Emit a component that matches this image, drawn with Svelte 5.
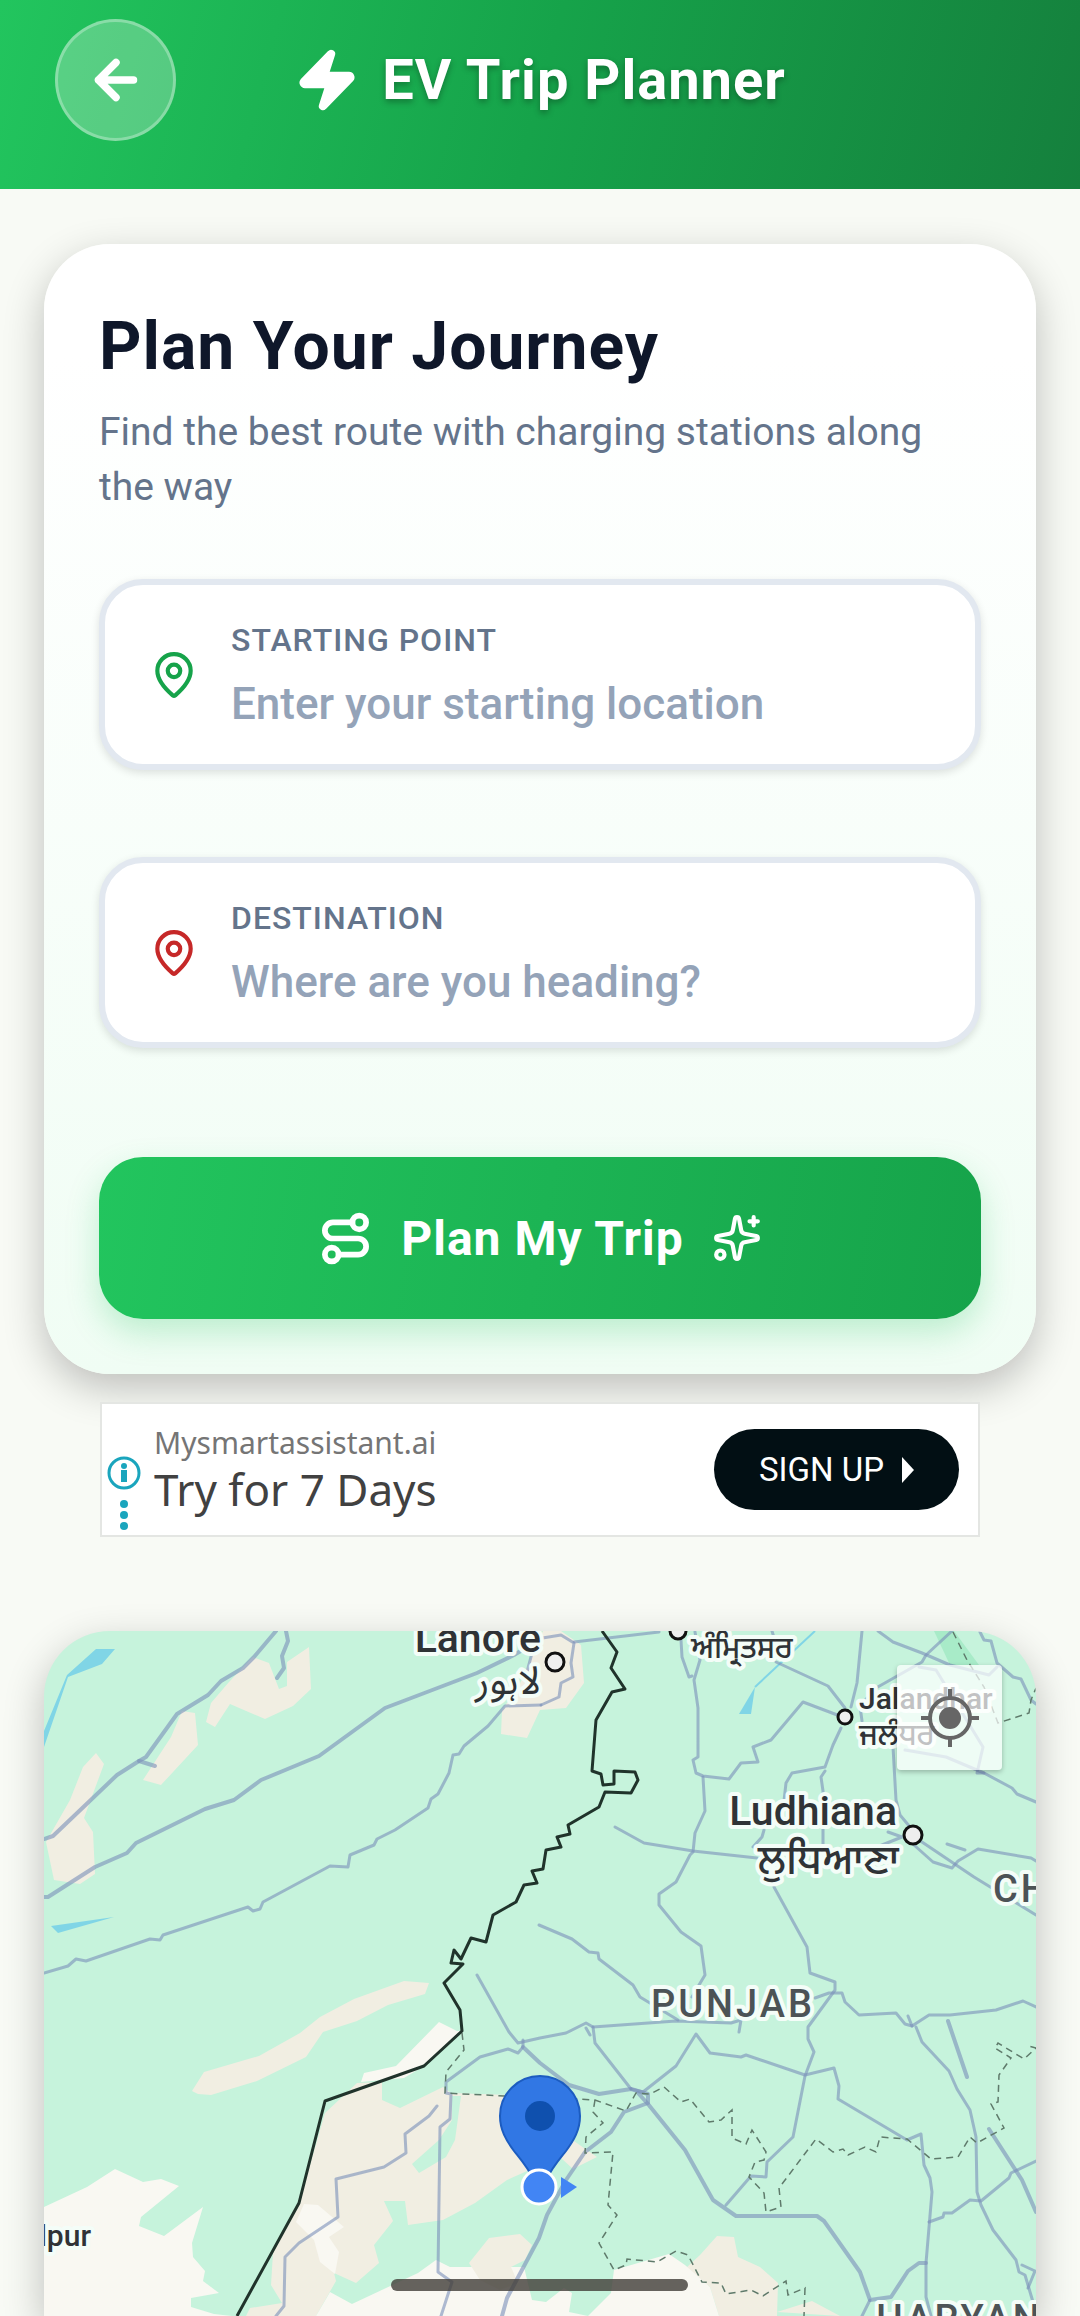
<script>
  let start = $state('')
  let destination = $state('')

  const sand = [
    '209,26 225,32 235,58 243,55 243,31 265,16 267,58 249,75 221,88 186,73 171,96 162,91 167,72 185,51',
    '138,80 151,82 154,114 117,154 99,149 127,106',
    '52,122 60,133 40,187 49,201 51,243 36,253 10,249 2,211 26,169 39,136',
    '499,0 517,0 537,14 540,52 522,77 496,79 483,107 457,103 458,79 475,55 490,20',
    '148,460 160,441 215,425 256,402 276,386 310,368 360,350 385,352 381,363 344,374 313,390 279,401 262,426 213,450 167,464 154,463',
    '281,482 313,452 338,451 338,469 356,477 399,456 407,462 492,465 492,536 463,549 431,572 399,589 364,594 361,570 340,570 349,590 330,614 335,632 312,652 290,642 292,650 272,685 202,685 206,677 238,672 227,654 229,622 255,572',
    '673,605 690,606 694,626 716,636 734,652 733,685 675,685 666,656 642,637 656,624',
    '733,681 768,670 796,685',
    '527,508 553,526 529,538 517,527'
  ]

  const pale = [
    '395,391 413,400 418,400 380,435 360,447 317,451 320,442 352,435',
    '260,573 274,574 300,596 285,606 295,621 291,643 276,631 270,609 252,591',
    '0,576 43,556 71,538 99,551 117,548 135,555 97,586 95,595 120,605 159,576 148,612 149,626 161,640 159,650 175,662 147,667 147,676 170,683 188,685 0,685',
    '272,685 286,661 308,673 374,642 392,629 406,636 480,636 488,669 502,671 520,657 528,662 525,681 544,685',
    '544,685 567,662 570,639 625,623 641,634 666,656 675,685'
  ]

  const water = [
    '56,18 71,18 58,33 24,46 0,116 0,100 23,44 52,18',
    '7,295 70,286 14,302',
    '711,56 707,83 695,83'
  ]

  const highways = [
    '232,0 210,26 199,37 177,50 164,64 133,83 102,126 95,130 73,144 9,205 0,208',
    '242,0 244,10 238,25 240,37 233,47',
    '95,130 111,135',
    '480,18 470,24 433,42 341,77 275,125 217,149 190,169 161,178 92,212 83,222 51,236 4,266 0,266',
    '904,390 923,446',
    '945,498 978,549 992,581',
    '479,416 496,432 525,454 555,463 587,458 604,463 604,472 580,481 567,501 541,521 522,549 503,584 495,607 463,667 458,685',
    '594,462 604,473 641,519 669,569 692,585 773,585 780,590 816,641 826,669 847,666 864,640 875,632 882,632'
  ]

  const roads = [
    '497,74 461,75 444,95 420,115 415,123 409,124 405,142 394,163 387,168 384,177 351,199 333,208 330,214 306,224 304,236 286,235 219,271 216,278 209,280 204,276 119,304 116,309 106,308 42,330 32,328 24,335 0,342',
    '497,74 515,66 517,52 529,46 527,32 530,12 517,4 480,10',
    '488,22 483,41',
    '530,11 615,1',
    '637,9 638,26 645,46 648,45',
    '651,1 656,29 650,49 654,77 654,126 649,129 652,142 659,145 685,148 697,132 714,131 709,116 727,109 759,71 796,85',
    '659,146 661,180 651,202 649,221 646,224 632,251 615,263 615,274 637,301 657,315 661,344 655,354 648,366',
    '571,196 600,212 649,220 713,227',
    '728,0 731,10',
    '732,31 784,55 801,77',
    '818,0 813,52 807,76',
    '797,97 789,114 781,136 748,142 742,152 740,170',
    '720,199 718,206 709,216',
    '781,140 777,146 779,160 779,220',
    '730,256 763,316 766,342 791,351 791,359 764,396 764,408 770,421 761,445 749,506 723,531 722,546 707,545 682,574',
    '834,0 849,11 878,22 906,34 945,44 953,36',
    '908,0 882,24 878,31 832,57 816,75 818,90',
    '936,1 940,9 947,10 953,32 969,46 977,48 987,69 992,73',
    '849,116 852,169 856,184 866,196 875,209 930,246 992,284',
    '870,214 889,231 908,237 914,230 934,218 987,227 992,230',
    '844,201 858,206 833,216',
    '903,213 921,219',
    '861,119 902,126 940,142 968,157 973,163 992,171',
    '875,36 892,39 939,116 933,142 940,142',
    '495,294 528,308 545,321 554,322 555,328 589,354 596,366 634,389',
    '433,344 465,401 474,412 496,407 522,402 542,392 549,396 632,390 687,392 697,389 695,401',
    '542,397 546,404',
    '479,409 479,416 474,422 464,418 436,426 402,451 402,462 407,463 406,488 396,496 394,641 408,651 397,685',
    '393,475 385,485 361,503 362,522 340,536 292,548 294,586 255,612 241,626 240,675 232,685',
    '549,396 551,412 587,458',
    '587,458 599,461 632,435 652,403 666,422 697,426 702,424 761,444 790,437 795,455 794,468 863,509 877,503 880,534 886,547 888,561 882,632 882,666 887,685',
    '826,669 818,685',
    '771,367 785,362 798,362 801,371 815,384 852,382 861,393 868,395 885,384 906,384 952,379 979,370 992,376',
    '864,385 868,395',
    '872,396 878,411 905,440 913,458 926,479 932,506 933,561 937,574 949,599 972,629 975,641 981,644 989,671',
    '978,634 991,640 984,657',
    '885,591 899,586 900,582 908,582 926,569 937,570 965,547 967,542 992,530'
  ]

  const stateLines = [
    '909,1 923,29 940,56 954,92 985,82 987,69 992,57',
    '418,402 420,419 402,441 401,462 460,465 534,468 551,469 582,480 592,462 606,463 620,456 637,471 646,468 665,491 677,489 688,479 688,507 702,513 708,499 722,521 720,529 711,531 705,546 720,562 722,581 737,576 735,557 772,508 789,521 799,518 804,524 821,516 832,521 836,506 863,508 887,528 914,526 926,506 933,512 960,497 947,473 954,471 955,444 967,427 951,417 954,412 980,428 992,417 984,415',
    '551,469 549,481 559,492 542,506 541,522 569,521 564,574 573,584 555,612 570,639 582,634 583,628 613,631 632,620 644,624 658,651 677,652 682,663 707,659 719,665 742,650 744,664 761,657 760,685'
  ]

  const border = '558,0 573,21 567,37 581,58 568,61 552,89 548,140 557,143 559,154 570,153 570,140 591,141 594,149 587,162 561,161 555,176 524,194 526,203 513,206 517,216 502,219 499,238 488,240 493,252 480,254 472,271 449,284 442,311 427,307 417,328 410,319 407,332 419,333 400,352 416,379 418,400 380,435 281,470 255,572 193,685'

  const cities = [
    { x: 511, y: 31, r: 9 },
    { x: 634, y: 0, r: 8 },
    { x: 801, y: 86, r: 7 },
    { x: 869, y: 204, r: 9 }
  ]

  const labels = [
    { text: 'Lahore', x: 497, y: 21, kind: 'city', end: true },
    { text: 'لاہور', x: 497, y: 63, kind: 'urdu' },
    { text: 'ਅੰਮ੍ਰਿਤਸਰ', x: 647, y: 27, kind: 'local' },
    { text: 'Jalandhar', x: 815, y: 78, kind: 'town' },
    { text: 'ਜਲੰਧਰ', x: 815, y: 114, kind: 'local' },
    { text: 'Ludhiana', x: 853, y: 194, kind: 'city', end: true },
    { text: 'ਲੁਧਿਆਣਾ', x: 855, y: 243, kind: 'local large', end: true },
    { text: 'CHANDIGARH', x: 949, y: 271, kind: 'region' },
    { text: 'PUNJAB', x: 607, y: 386, kind: 'region' },
    { text: 'HARYANA', x: 832, y: 701, kind: 'region' },
    { text: 'Bahawalpur', x: 47, y: 615, kind: 'town', end: true }
  ]
</script>

{#snippet pin(color)}
  <svg class="field-icon {color}" viewBox="0 0 24 24" aria-hidden="true">
    <path d="M20 10c0 4.993-5.539 10.193-7.399 11.799a1 1 0 0 1-1.202 0C9.539 20.193 4 14.993 4 10a8 8 0 0 1 16 0" />
    <circle cx="12" cy="10" r="3" />
  </svg>
{/snippet}

<div class="screen">
  <header class="topbar">
    <button class="back" aria-label="Back">
      <svg viewBox="0 0 24 24" aria-hidden="true">
        <path d="m12 19-7-7 7-7M19 12H5" />
      </svg>
    </button>
    <h1>
      <svg class="bolt" viewBox="0 0 24 24" aria-hidden="true">
        <path d="M4 14a1 1 0 0 1-.78-1.63l9.9-10.2a.5.5 0 0 1 .86.46l-1.92 6.02A1 1 0 0 0 13 10h7a1 1 0 0 1 .78 1.63l-9.9 10.2a.5.5 0 0 1-.86-.46l1.92-6.02A1 1 0 0 0 11 14z" />
      </svg>
      EV Trip Planner
    </h1>
  </header>

  <main>
    <form class="card" onsubmit={e => e.preventDefault()}>
      <h2>Plan Your Journey</h2>
      <p class="subtitle">Find the best route with charging stations along the way</p>

      <div class="field">
        {@render pin('green')}
        <div class="field-text">
          <label for="start">STARTING POINT</label>
          <input id="start" type="text" placeholder="Enter your starting location" bind:value={start} />
        </div>
      </div>

      <div class="field">
        {@render pin('red')}
        <div class="field-text">
          <label for="destination">DESTINATION</label>
          <input id="destination" type="text" placeholder="Where are you heading?" bind:value={destination} />
        </div>
      </div>

      <button class="plan" type="submit">
        <svg class="route" viewBox="0 0 24 24" aria-hidden="true">
          <circle cx="6" cy="19" r="3" />
          <path d="M9 19h8.5a3.5 3.5 0 0 0 0-7h-11a3.5 3.5 0 0 1 0-7H15" />
          <circle cx="18" cy="5" r="3" />
        </svg>
        <span>Plan My Trip</span>
        <svg class="sparkles" viewBox="0 0 24 24" aria-hidden="true">
          <path d="M11.017 2.814a1 1 0 0 1 1.966 0l1.051 5.558a2 2 0 0 0 1.594 1.594l5.558 1.051a1 1 0 0 1 0 1.966l-5.558 1.051a2 2 0 0 0-1.594 1.594l-1.051 5.558a1 1 0 0 1-1.966 0l-1.051-5.558a2 2 0 0 0-1.594-1.594l-5.558-1.051a1 1 0 0 1 0-1.966l5.558-1.051a2 2 0 0 0 1.594-1.594z" />
          <path d="M20 2v4M22 4h-4" />
          <circle cx="4" cy="20" r="2" />
        </svg>
      </button>
    </form>

    <aside class="ad">
      <svg class="ad-info" viewBox="0 0 36 80" aria-hidden="true">
        <circle class="ring" cx="18" cy="18" r="15" />
        <circle cx="18" cy="11" r="3" />
        <path d="M15 15h6v12h-6z" />
        <circle cx="18" cy="49" r="4" />
        <circle cx="18" cy="60" r="4" />
        <circle cx="18" cy="71" r="4" />
      </svg>
      <div class="ad-text">
        <span class="ad-site">Mysmartassistant.ai</span>
        <span class="ad-title">Try for 7 Days</span>
      </div>
      <button class="signup">
        SIGN UP
        <svg viewBox="0 0 12 26" aria-hidden="true"><path d="M0 0v26l12-13z" /></svg>
      </button>
    </aside>

    <section class="map" aria-label="Map">
      <svg class="map-canvas" viewBox="0 0 992 685" preserveAspectRatio="xMinYMin slice">
        <polygon class="wood" points="890,0 910,0 935,34 906,34" />
        {#each sand as points}
          <polygon class="sand" {points} />
        {/each}
        {#each pale as points}
          <polygon class="pale" {points} />
        {/each}
        <polygon class="sand" points="445,607 476,603 488,614 481,629 467,636 474,652 456,659 436,649 425,632" />
        <polygon class="land" points="417,465 411,509 402,526 375,542 368,533 395,509 408,489 408,465" />
        {#each water as points}
          <polygon class="water" {points} />
        {/each}
        <path class="river" d="M771 0 711 56" />

        {#each roads as points}
          <polyline class="road" {points} />
        {/each}
        {#each highways as points}
          <polyline class="road highway" {points} />
        {/each}
        {#each stateLines as points}
          <polyline class="state-line" {points} />
        {/each}
        <polyline class="border" points={border} />

        {#each cities as city}
          <circle class="city-dot" cx={city.x} cy={city.y} r={city.r} />
        {/each}
        {#each labels as label}
          <text class={label.kind} class:end={label.end} x={label.x} y={label.y}>{label.text}</text>
        {/each}

        <path class="marker" d="M456 485a40 40 0 0 1 80 0c0 14-6 24-14 35-8 10-15 18-19 28h-14c-4-10-11-18-19-28-8-11-14-21-14-35z" />
        <circle class="marker-hole" cx="496" cy="485" r="15" />
        <path class="heading" d="m517 546 16 10-16 11z" />
        <circle class="position" cx="495" cy="556" r="17" />
      </svg>
      <button class="locate" aria-label="My location">
        <svg viewBox="0 0 60 60" aria-hidden="true">
          <circle class="ring" cx="30" cy="30" r="20" />
          <circle cx="30" cy="30" r="11" />
          <path d="M30 1v10M30 49v10M1 30h10M49 30h10" />
        </svg>
      </button>
    </section>
  </main>

  <div class="home-indicator"></div>
</div>

<style>
  :global(body) {
    margin: 0;
    background: #f8faf5;
  }

  .screen {
    display: flex;
    flex-direction: column;
    height: 100vh;
    overflow: hidden;
    background: #f8faf5;
    font-family: Roboto, 'Liberation Sans', sans-serif;
  }

  h1,
  h2,
  p {
    margin: 0;
  }

  button {
    padding: 0;
    border: 0;
    font-family: inherit;
    cursor: pointer;
  }

  svg {
    display: block;
    flex-shrink: 0;
  }

  .topbar {
    display: grid;
    grid-template-columns: 122px 1fr 122px;
    align-items: center;
    padding: 19px 55px 48px;
    background: linear-gradient(105deg, #22c55e 0%, #16a34a 50%, #15803d 100%);
  }

  .back {
    display: flex;
    align-items: center;
    justify-content: center;
    box-sizing: border-box;
    width: 121px;
    height: 122px;
    border: 3px solid rgba(255, 255, 255, 0.3);
    border-radius: 50%;
    background: rgba(255, 255, 255, 0.25);
  }

  .back svg {
    width: 60px;
    height: 60px;
    fill: none;
    stroke: #fff;
    stroke-width: 3;
    stroke-linecap: round;
    stroke-linejoin: round;
  }

  h1 {
    display: flex;
    align-items: center;
    justify-content: center;
    gap: 22px;
    color: #fff;
    font-size: 56px;
    font-weight: 700;
    line-height: 70px;
    letter-spacing: 1px;
    text-shadow: 0 3px 6px rgba(0, 0, 0, 0.3);
  }

  .bolt {
    width: 66px;
    height: 66px;
    fill: #fff;
    stroke: #fff;
    stroke-width: 2;
    stroke-linejoin: round;
  }

  main {
    display: flex;
    flex: 1;
    flex-direction: column;
    padding: 55px 44px 0;
  }

  .card {
    display: flex;
    flex-direction: column;
    padding: 55px;
    border-radius: 66px;
    background: linear-gradient(180deg, #fff 0%, #fff 10%, #f0fdf4 100%);
    box-shadow: 0 14px 40px rgba(0, 0, 0, 0.24);
  }

  h2 {
    margin-bottom: 10px;
    color: #0f172a;
    font-size: 66px;
    font-weight: 700;
    line-height: 96px;
    letter-spacing: 1px;
  }

  .subtitle {
    margin-bottom: 64px;
    color: #64748b;
    font-size: 39px;
    line-height: 55px;
  }

  .field {
    display: flex;
    align-items: center;
    gap: 32px;
    padding: 30px 44px;
    border: 6px solid #e2e8f0;
    border-radius: 44px;
    background: #fff;
    box-shadow: 0 3px 8px rgba(0, 0, 0, 0.12);
  }

  .field + .field {
    margin-top: 87px;
  }

  .field-icon {
    width: 50px;
    height: 50px;
    fill: none;
    stroke-width: 2;
    stroke-linecap: round;
    stroke-linejoin: round;
  }

  .green {
    stroke: #16a34a;
  }

  .red {
    stroke: #c62828;
  }

  .field-text {
    display: flex;
    flex: 1;
    flex-direction: column;
    gap: 12px;
    min-width: 0;
    padding-top: 3px;
  }

  label {
    color: #64748b;
    font-size: 32px;
    font-weight: 500;
    line-height: 44px;
    letter-spacing: 1px;
  }

  input {
    width: 100%;
    height: 60px;
    padding: 0;
    border: 0;
    outline: none;
    background: none;
    color: #0f172a;
    font-family: inherit;
    font-size: 44px;
    font-weight: 500;
    line-height: 60px;
  }

  input::placeholder {
    color: #94a3b8;
    opacity: 1;
  }

  .plan {
    display: flex;
    align-items: center;
    justify-content: center;
    gap: 28px;
    height: 162px;
    margin-top: 109px;
    border-radius: 44px;
    background: linear-gradient(100deg, #22c55e, #16a34a);
    box-shadow: 0 14px 32px rgba(34, 197, 94, 0.25);
    color: #fff;
    font-size: 48px;
    font-weight: 700;
    letter-spacing: 1px;
  }

  .plan svg {
    fill: none;
    stroke: #fff;
    stroke-linecap: round;
    stroke-linejoin: round;
  }

  .route {
    width: 55px;
    height: 55px;
    stroke-width: 2.5;
  }

  .sparkles {
    width: 50px;
    height: 50px;
    stroke-width: 2;
  }

  .ad {
    display: flex;
    align-items: center;
    box-sizing: border-box;
    height: 135px;
    margin: 28px 56px 0;
    padding: 0 19px 0 4px;
    border: 2px solid #e4e6e3;
    background: #fff;
  }

  .ad-info {
    align-self: flex-end;
    width: 36px;
    height: 80px;
    fill: #1aa5bd;
  }

  .ad-info .ring {
    fill: none;
    stroke: #1aa5bd;
    stroke-width: 3;
  }

  .ad-text {
    display: flex;
    flex: 1;
    flex-direction: column;
    padding-left: 12px;
    font-family: 'Noto Sans', 'Open Sans', sans-serif;
  }

  .ad-site {
    color: #757575;
    font-size: 30px;
    line-height: 38px;
  }

  .ad-title {
    color: #414141;
    font-size: 44px;
    line-height: 54px;
  }

  .signup {
    display: flex;
    align-items: center;
    justify-content: center;
    gap: 18px;
    width: 245px;
    height: 81px;
    border-radius: 41px;
    background: #020f14;
    color: #fff;
    font-size: 33px;
  }

  .signup svg {
    width: 12px;
    height: 26px;
    fill: #fff;
  }

  .map {
    position: relative;
    flex: 1;
    min-height: 0;
    margin-top: 94px;
    border-radius: 66px 66px 0 0;
    background: #c6f3dc;
    box-shadow: 0 14px 40px rgba(0, 0, 0, 0.24);
    overflow: hidden;
  }

  .map-canvas {
    width: 100%;
    height: 100%;
  }

  .land {
    fill: #c6f3dc;
  }

  .wood {
    fill: #a8ebc8;
  }

  .sand {
    fill: #f1eee2;
  }

  .pale {
    fill: #f9f8f2;
  }

  .water {
    fill: #80d5e6;
  }

  .river {
    stroke: #80d5e6;
    stroke-width: 2;
  }

  .road {
    fill: none;
    stroke: rgba(122, 143, 185, 0.6);
    stroke-width: 3;
    stroke-linejoin: round;
    stroke-linecap: round;
  }

  .highway {
    stroke-width: 4;
  }

  .state-line {
    fill: none;
    stroke: #5f7a6b;
    stroke-width: 1.5;
    stroke-dasharray: 7 5;
  }

  .border {
    fill: none;
    stroke: #20332b;
    stroke-width: 3;
    stroke-linejoin: round;
  }

  .city-dot {
    fill: #eee;
    stroke: #111;
    stroke-width: 3;
  }

  text {
    fill: #2f3336;
    stroke: #f4fdf8;
    stroke-width: 8;
    stroke-linejoin: round;
    paint-order: stroke;
    font-weight: 500;
  }

  .end {
    text-anchor: end;
  }

  .city {
    font-size: 41px;
  }

  .town {
    font-size: 30px;
  }

  .region {
    fill: #4c5356;
    font-size: 38px;
    letter-spacing: 3px;
  }

  .local {
    font-family: 'Noto Sans Gurmukhi', 'Noto Sans', sans-serif;
    font-size: 30px;
  }

  .large {
    font-size: 41px;
  }

  .urdu {
    font-family: 'Noto Sans Arabic', 'DejaVu Sans', sans-serif;
    font-size: 39px;
    font-weight: 400;
    direction: rtl;
  }

  .marker {
    fill: #3177e4;
    stroke: #1c5cc0;
    stroke-width: 2;
  }

  .marker-hole {
    fill: #0f50ae;
  }

  .heading {
    fill: #4285f4;
  }

  .position {
    fill: #4285f4;
    stroke: #fff;
    stroke-width: 3;
  }

  .locate {
    position: absolute;
    top: 34px;
    right: 34px;
    display: flex;
    align-items: center;
    justify-content: center;
    width: 105px;
    height: 105px;
    border-radius: 4px;
    background: rgba(255, 255, 255, 0.7);
    box-shadow: 0 2px 5px rgba(0, 0, 0, 0.25);
  }

  .locate svg {
    width: 60px;
    height: 60px;
    fill: #666;
  }

  .locate .ring {
    fill: none;
    stroke: #666;
    stroke-width: 4;
  }

  .locate path {
    stroke: #666;
    stroke-width: 4;
  }

  .home-indicator {
    position: fixed;
    bottom: 25px;
    left: 50%;
    width: 297px;
    height: 12px;
    margin-left: -149px;
    border-radius: 6px;
    background: rgba(64, 60, 55, 0.8);
  }
</style>
